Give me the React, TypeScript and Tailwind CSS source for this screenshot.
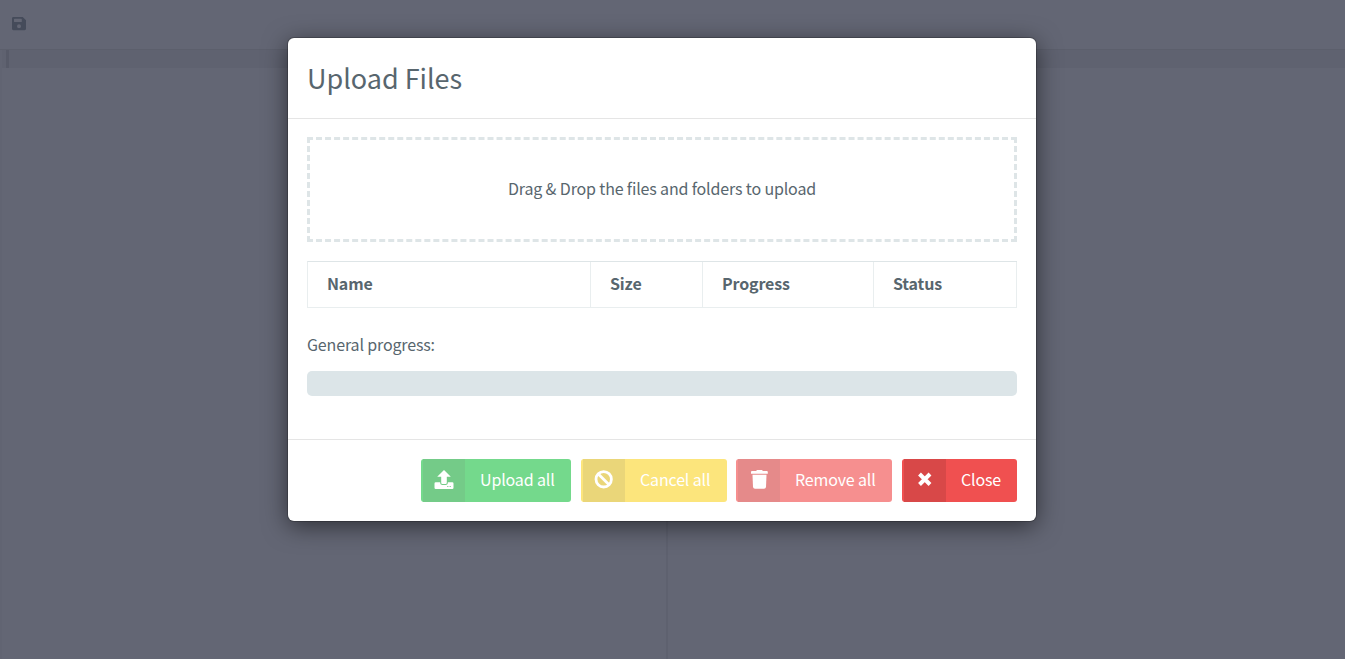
import { ReactNode } from "react";

const columns = [
  { label: "Name", width: "w-[283px]" },
  { label: "Size", width: "w-[112px]" },
  { label: "Progress", width: "w-[171px]" },
  { label: "Status", width: "w-[143px]" },
];

function SaveIcon() {
  return (
    <svg className="block h-[14px] w-[14px]" viewBox="0 0 14 14" fill="#454b5a" fillRule="evenodd">
      <path d="M1.5 0H10.7L14 3.3V11.8Q14 13.2 12.6 13.2H1.4Q0 13.2 0 11.8V1.4Q0 0 1.5 0ZM2.6 1.8Q2 1.8 2 2.4V4.5Q2 5.1 2.6 5.1H9.2Q9.8 5.1 9.8 4.5V2.4Q9.8 1.8 9.2 1.8ZM7 7.2A2 2 0 1 0 7 11.2A2 2 0 1 0 7 7.2Z" />
    </svg>
  );
}

function UploadIcon() {
  return (
    <svg className="block h-5 w-5" viewBox="0 0 20 20" fill="currentColor" fillRule="evenodd">
      <path d="M10 0L16.8 6.7H12.8V12.8Q12.8 14 11.6 14H8.4Q7.2 14 7.2 12.8V6.7H3.2Z" />
      <path d="M1.7 12.2H6.2V13.2Q6.4 15 8.3 15H11.7Q13.6 15 13.8 13.2V12.2H18.3Q19.5 12.2 19.5 13.4V17.7Q19.5 18.9 18.3 18.9H1.7Q0.5 18.9 0.5 17.7V13.4Q0.5 12.2 1.7 12.2ZM13 16.2V17H14.5V16.2ZM15.5 16.2V17H17V16.2Z" />
    </svg>
  );
}

function BanIcon() {
  return (
    <svg className="block h-5 w-5" viewBox="0 0 20 20" fill="none" stroke="currentColor" strokeWidth="2.8">
      <circle cx="9.7" cy="9.3" r="7.7" />
      <path d="M4.3 3.9L15.1 14.7" />
    </svg>
  );
}

function TrashIcon() {
  return (
    <svg className="block h-5 w-5" viewBox="0 0 20 20" fill="currentColor">
      <path d="M7.8 0H13.2L13.7 0.9H17.8Q18.8 0.9 18.8 1.9V3.7H2V1.9Q2 0.9 3 0.9H7.3Z" />
      <path d="M3.5 4.7H17.5L17 17Q16.8 18.7 15 18.7H6Q4.2 18.7 4 17Z" />
    </svg>
  );
}

function CloseIcon() {
  return (
    <svg className="block h-5 w-5" viewBox="0 0 20 20" fill="none" stroke="currentColor" strokeWidth="4">
      <path d="M4.5 4L15 14.5M15 4L4.5 14.5" />
    </svg>
  );
}

type ActionProps = { label: string; icon: ReactNode; className: string; iconClassName: string };

function ActionButton({ label, icon, className, iconClassName }: ActionProps) {
  return (
    <button className={`flex h-[43px] overflow-hidden rounded-[3px] pl-0.5 text-white ${className}`}>
      <span className={`flex h-full w-[42px] shrink-0 justify-center pt-[11px] ${iconClassName}`}>{icon}</span>
      <span className="flex-1 whitespace-nowrap pl-[15px] text-left leading-[40px]">{label}</span>
    </button>
  );
}

export default function App() {
  return (
    <div className="relative h-[659px] w-full overflow-hidden bg-[#636674] font-['Noto_Sans_CJK_SC',sans-serif] text-[16px] tracking-[-0.15px] text-[#58666e]">
      <div className="flex h-full flex-col">
        <header className="flex h-[50px] shrink-0 border-b border-[#5c5f6c] pl-3 pt-[17px]">
          <SaveIcon />
        </header>
        <main className="flex flex-1">
          <section className="w-[666px] border-l-2 border-[#616472]">
            <div className="h-[18px] bg-[#5f6270] pl-1">
              <div className="h-full w-[3px] bg-[#575a68]" />
            </div>
          </section>
          <section className="flex-1 border-l-2 border-[#5e616f]">
            <div className="h-[18px] bg-[#5f6270]" />
          </section>
        </main>
      </div>

      <div className="absolute inset-0 flex items-start justify-center pr-[21px] pt-[38px]">
        <div role="dialog" className="h-[483px] w-[748px] rounded-[6px] bg-white shadow-[0_0_0_1px_rgba(0,0,0,0.2),0_5px_25px_rgba(0,0,0,0.55)]">
          <div className="h-[81px] border-b border-[#e5e5e5] px-[19px]">
            <h1 className="text-[27px] leading-[80px] tracking-[-0.02px]">Upload Files</h1>
          </div>
          <div className="h-[320px] px-[19px] pt-[18px]">
            <div className="flex h-[105px] items-center justify-center border-[3px] border-dashed border-[#dee5e7] pb-[3px]">
              Drag &amp; Drop the files and folders to upload
            </div>
            <div className="mt-[19px] flex h-[47px] border border-r-0 border-[#e9eeef] border-t-[#dee5e7] font-bold">
              {columns.map((c) => (
                <div key={c.label} className={`h-full shrink-0 border-r border-[#e9eeef] pl-[19px] leading-[42px] ${c.width}`}>
                  {c.label}
                </div>
              ))}
            </div>
            <div className="mt-[23px] leading-[26px]">General progress:</div>
            <div className="mt-[14px] h-[25px] rounded-[5px] bg-[#dce5e8]" />
          </div>
          <div className="flex h-[82px] justify-end border-t border-[#e5e5e5] px-[19px] pt-[19px]">
            <ActionButton label="Upload all" icon={<UploadIcon />} className="mr-[10px] w-[150px] bg-[#74d98c]" iconClassName="bg-[#74cb88]" />
            <ActionButton label="Cancel all" icon={<BanIcon />} className="mr-[9px] w-[146px] bg-[#fce57c]" iconClassName="bg-[#ead679]" />
            <ActionButton label="Remove all" icon={<TrashIcon />} className="mr-[10px] w-[156px] bg-[#f68f8f]" iconClassName="bg-[#e58a8a]" />
            <ActionButton label="Close" icon={<CloseIcon />} className="w-[115px] bg-[#f05050]" iconClassName="bg-[#d84848]" />
          </div>
        </div>
      </div>
    </div>
  );
}
